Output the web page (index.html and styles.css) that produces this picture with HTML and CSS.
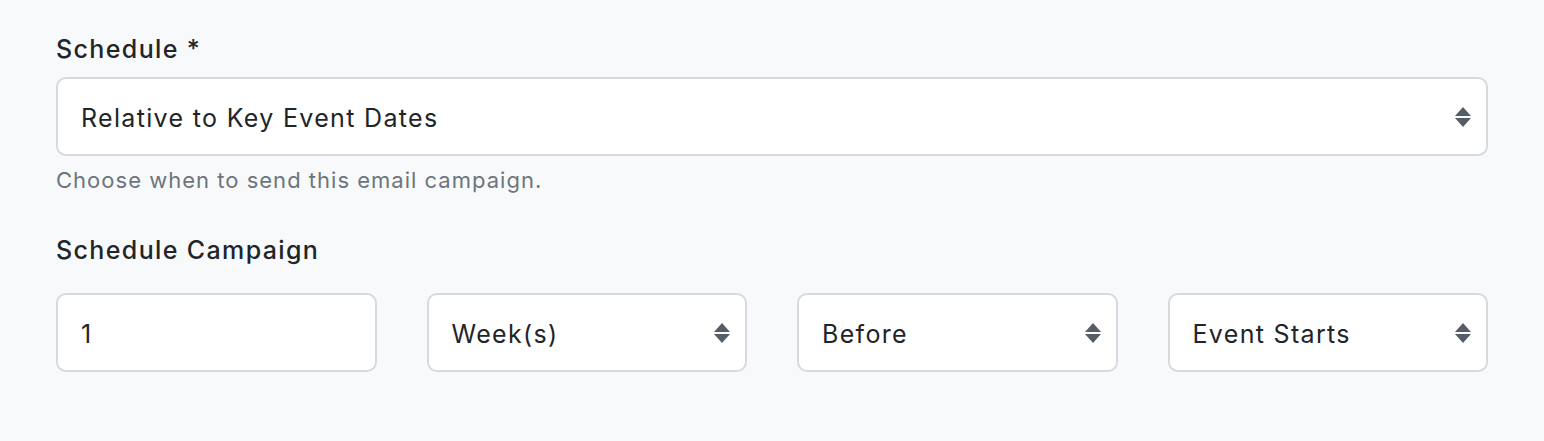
FILE: index.html
```html
<!DOCTYPE html>
<html lang="en">
<head>
<meta charset="utf-8">
<title>Schedule</title>
<link rel="stylesheet" href="styles.css">
</head>
<body>
<main class="form">
  <div class="field">
    <label class="label">Schedule *</label>
    <div class="select">
      <span class="value">Relative to Key Event Dates</span>
      <svg class="arrows" width="16" height="20" viewBox="0 0 16 20"><path d="M8 0 L16 9 L0 9 Z M0 11 L16 11 L8 20 Z"/></svg>
    </div>
    <p class="help">Choose when to send this email campaign.</p>
  </div>
  <div class="field field-second">
    <label class="label label-row">Schedule Campaign</label>
    <div class="row">
      <div class="select"><span class="value">1</span></div>
      <div class="select">
        <span class="value">Week(s)</span>
        <svg class="arrows" width="16" height="20" viewBox="0 0 16 20"><path d="M8 0 L16 9 L0 9 Z M0 11 L16 11 L8 20 Z"/></svg>
      </div>
      <div class="select">
        <span class="value">Before</span>
        <svg class="arrows" width="16" height="20" viewBox="0 0 16 20"><path d="M8 0 L16 9 L0 9 Z M0 11 L16 11 L8 20 Z"/></svg>
      </div>
      <div class="select">
        <span class="value">Event Starts</span>
        <svg class="arrows" width="16" height="20" viewBox="0 0 16 20"><path d="M8 0 L16 9 L0 9 Z M0 11 L16 11 L8 20 Z"/></svg>
      </div>
    </div>
  </div>
</main>
</body>
</html>
```

FILE: styles.css
```css
html, body {
  margin: 0;
  padding: 0;
  background: #f8f9fa;
}
body {
  font-family: Inter, "Noto Sans", "Liberation Sans", sans-serif;
  color: #212529;
}
.form {
  padding: 31px 56px 0 56px;
}
.label {
  display: block;
  font-size: 25px;
  line-height: 36px;
  font-weight: 500;
  letter-spacing: 0.055em;
  color: #212529;
  margin-bottom: 10px;
}
.label-row {
  margin-bottom: 25px;
}
.select {
  box-sizing: border-box;
  height: 79px;
  background: #ffffff;
  border: 2px solid #d6dadf;
  border-radius: 10px;
  display: flex;
  align-items: center;
  justify-content: space-between;
  padding: 0 15px 0 23px;
  font-size: 25px;
  letter-spacing: 0.053em;
  color: #212529;
}
.value {
  padding-top: 3px;
}
.arrows {
  display: block;
  width: 16px;
  height: 20px;
  fill: #555d66;
}
.help {
  margin: 9px 0 0 0;
  font-size: 22px;
  line-height: 30px;
  letter-spacing: 0.046em;
  color: #6c757d;
}
.field-second {
  margin-top: 37px;
}
.row {
  display: grid;
  grid-template-columns: repeat(4, 1fr);
  gap: 50px;
}
```
